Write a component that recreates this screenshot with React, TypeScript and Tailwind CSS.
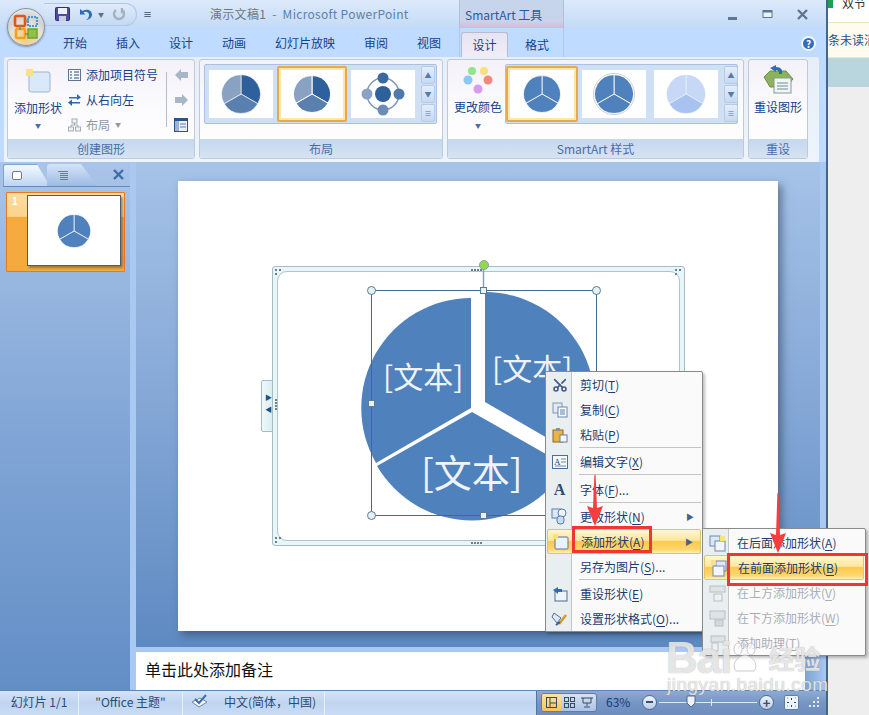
import type { ReactNode } from 'react'
import { Scissors } from 'lucide-react'

const wedgeLeft = 'M471 298 A110 110 0 0 0 376 463 L471 408 Z'
const wedgeBottom = 'M377 466 A110 110 0 0 0 567 466 L472 412 Z'
const wedgeRight = 'M485 292 A110 110 0 0 1 580 457 L485 402 Z'

function MiniPie({ size, fills, gap = 0, ring = false }: { size: number; fills: [string, string, string]; gap?: number; ring?: boolean }) {
  return (
    <svg width={size} height={size} viewBox="0 0 100 100">
      {ring && <circle cx="50" cy="50" r="49" fill="#fff" stroke="#c8c8c8" strokeWidth="2" />}
      <path d="M50 50 L50 4 A46 46 0 0 1 90 73 Z" fill={fills[0]} stroke="#fff" strokeWidth={gap} />
      <path d="M50 50 L90 73 A46 46 0 0 1 10 73 Z" fill={fills[1]} stroke="#fff" strokeWidth={gap} />
      <path d="M50 50 L10 73 A46 46 0 0 1 50 4 Z" fill={fills[2]} stroke="#fff" strokeWidth={gap} />
    </svg>
  )
}

function GalleryScroll() {
  return (
    <div className="flex w-[14px] flex-col gap-px self-stretch">
      {['▲', '▼', '≡'].map((g) => (
        <div key={g} className="flex flex-1 items-center justify-center rounded-[2px] border border-[#b6cbe6] bg-gradient-to-b from-[#e4eefb] to-[#c6d9f1] text-[7px] leading-none text-[#5a7aa5]">
          {g}
        </div>
      ))}
    </div>
  )
}

function Thumb({ children, selected = false }: { children: ReactNode; selected?: boolean }) {
  return selected ? (
    <div className="flex h-[56px] items-center justify-center rounded-[2px] border-2 border-[#e9a94a] bg-white shadow-[inset_0_0_0_2px_#fde7a8]">
      {children}
    </div>
  ) : (
    <div className="flex h-[48px] w-[64px] items-center justify-center bg-white">{children}</div>
  )
}

function Group({ label, className, children }: { label: string; className: string; children: ReactNode }) {
  return (
    <div className={`flex h-[100px] flex-col overflow-hidden rounded-[3px] border border-[#bccadb] bg-gradient-to-b from-[#f4f1f8] via-[#fbfbfd] to-white ${className}`}>
      <div className="relative min-h-0 flex-1">{children}</div>
      <div className="flex h-[19px] items-center justify-center bg-gradient-to-b from-[#c5d7ee] to-[#d6e3f3] text-[12px] text-[#4a6da3]">{label}</div>
    </div>
  )
}

function ShapeIcon() {
  return (
    <svg width="18" height="18" viewBox="0 0 18 18">
      <rect x="3" y="4" width="13" height="12" rx="1" fill="#eaf2fb" stroke="#5f7597" />
      <rect x="1" y="1" width="5" height="5" fill="#fce27c" />
    </svg>
  )
}

function KeyLabel({ text, hotkey }: { text: string; hotkey: string }) {
  return (
    <>
      {text}(<span className="underline underline-offset-2">{hotkey[1]}</span>){hotkey.slice(3)}
    </>
  )
}

type Row = { text: string; key: string; icon: ReactNode; arrow?: boolean; hot?: boolean; after?: boolean; wide?: boolean }

const menuRows: Row[] = [
  { text: '剪切', key: '(T)', icon: <Scissors size={16} strokeWidth={2.4} className="-rotate-90 text-[#3f5a86]" /> },
  { text: '复制', key: '(C)', icon: <svg width="16" height="16" viewBox="0 0 16 16"><rect x="1" y="1" width="9" height="10" fill="#dfe9f7" stroke="#7f98bb" /><rect x="6" y="5" width="9" height="10" fill="#f7fafe" stroke="#6d87ab" /><path d="M8 8h5M8 10h5M8 12h5" stroke="#5f7fb0" /></svg> },
  { text: '粘贴', key: '(P)', after: true, icon: <svg width="16" height="16" viewBox="0 0 16 16"><rect x="1" y="3" width="10" height="12" fill="#e5b44d" stroke="#8d6a1e" /><rect x="4" y="1" width="4" height="3" fill="#8a8f98" /><rect x="8" y="8" width="7" height="7" fill="#f4f7fb" stroke="#6c7fa0" /></svg> },
  { text: '编辑文字', key: '(X)', after: true, wide: true, icon: <svg width="16" height="14" viewBox="0 0 16 14"><rect x=".5" y=".5" width="15" height="13" fill="#f5f8fc" stroke="#4f6d96" /><text x="2" y="10" fontSize="9" fill="#24406b" fontFamily="Liberation Serif">A</text><path d="M9 4h5M9 7h5M3 11h11" stroke="#7087a8" /></svg> },
  { text: '字体', key: '(F)...', after: true, icon: <span className="font-['Liberation_Serif'] text-[16px] font-bold leading-none text-[#2f4a75]">A</span> },
  { text: '更改形状', key: '(N)', arrow: true, icon: <svg width="18" height="17" viewBox="0 0 18 17"><rect x="1" y="1" width="9" height="9" fill="#dbe8f7" stroke="#5e7da6" /><circle cx="11" cy="5" r="4" fill="#eef4fb" stroke="#5e7da6" /><rect x="6" y="8" width="7" height="8" rx="3" fill="#c9dcf2" stroke="#5e7da6" /></svg> },
  { text: '添加形状', key: '(A)', arrow: true, hot: true, icon: <ShapeIcon /> },
  { text: '另存为图片', key: '(S)...', after: true, icon: null },
  { text: '重设形状', key: '(E)', icon: <svg width="17" height="16" viewBox="0 0 17 16"><rect x="4" y="5" width="12" height="10" fill="#eef4fb" stroke="#4f6d96" /><path d="M2 4 L7 1 V3 H11 V6 H7 V8 Z" fill="#2f6db2" /></svg> },
  { text: '设置形状格式', key: '(O)...', icon: <svg width="17" height="16" viewBox="0 0 17 16"><path d="M3 2 L10 7 L6 12 L1 6 Z" fill="#dfe8f3" stroke="#4f6d96" /><path d="M8 13 L15 4" stroke="#d49b2c" strokeWidth="2.5" /><path d="M5 14 L9 11" stroke="#3c5f93" strokeWidth="2" /></svg> },
]

const subRows: { text: string; key: string; hot?: boolean; off?: boolean; icon: ReactNode }[] = [
  { text: '在后面添加形状', key: '(A)', icon: <svg width="18" height="18" viewBox="0 0 18 18"><rect x="1" y="2" width="10" height="10" fill="#dbe8f7" stroke="#6f89ad" /><rect x="6" y="7" width="10" height="10" fill="#f2f6fb" stroke="#6f89ad" /><rect x="11" y="2" width="5" height="5" fill="#fce27c" /></svg> },
  { text: '在前面添加形状', key: '(B)', hot: true, icon: <svg width="18" height="18" viewBox="0 0 18 18"><rect x="6" y="2" width="10" height="10" fill="#dbe8f7" stroke="#6f89ad" /><rect x="3" y="7" width="11" height="10" fill="#f2f6fb" stroke="#6f89ad" /><rect x="1" y="1" width="5" height="5" fill="#fce27c" /></svg> },
  { text: '在上方添加形状', key: '(V)', off: true, icon: <svg width="18" height="18" viewBox="0 0 18 18"><rect x="1" y="2" width="15" height="6" fill="#dfe3e6" stroke="#b8bfc6" /><rect x="5" y="10" width="8" height="7" fill="#eef0f2" stroke="#b8bfc6" /></svg> },
  { text: '在下方添加形状', key: '(W)', off: true, icon: <svg width="18" height="18" viewBox="0 0 18 18"><rect x="1" y="2" width="15" height="8" fill="#dfe3e6" stroke="#b8bfc6" /><rect x="6" y="11" width="8" height="6" fill="#d5d9dd" stroke="#b8bfc6" /></svg> },
  { text: '添加助理', key: '(T)', off: true, icon: <svg width="18" height="18" viewBox="0 0 18 18"><rect x="2" y="2" width="14" height="6" fill="#dfe3e6" stroke="#b8bfc6" /><rect x="3" y="9" width="6" height="8" fill="#eef0f2" stroke="#b8bfc6" /></svg> },
]

const hotRow = 'rounded-[2px] border border-[#e3c26f] bg-[linear-gradient(#fff6d2_0,#ffe69d_45%,#fdc94e_50%,#fdd76f_85%,#fff0b8_100%)]'

function ContextMenu() {
  return (
    <div className="absolute left-[545px] top-[371px] w-[158px] rounded-[2px] border border-[#8a8a8a] bg-[#fafafa] shadow-[2px_2px_3px_rgba(0,0,0,0.25)]">
      <div className="absolute bottom-0 left-0 top-0 w-[26px] border-r border-[#c5c5c5] bg-[#e9eef0]" />
      {menuRows.map((r) => (
        <div key={r.text}>
          <div className={`relative mx-[1px] flex h-[25px] items-center ${r.hot ? hotRow : ''}`}>
            <div className="flex w-[25px] shrink-0 items-center justify-center">{r.icon}</div>
            <span className="ml-[8px] whitespace-nowrap text-[12px] text-[#1c3a6e]">
              <KeyLabel text={r.text} hotkey={r.key} />
            </span>
            {r.arrow && <span className="absolute right-[7px] text-[8px] text-[#47628c]">▶</span>}
          </div>
          {r.after && <div className={`ml-[33px] mr-[1px] h-px bg-[#c5c5c5] ${r.wide ? 'mb-[2px]' : 'mb-[1px]'}`} />}
        </div>
      ))}
    </div>
  )
}

function SubMenu() {
  return (
    <div className="absolute left-[702px] top-[528px] w-[164px] rounded-[2px] border border-[#8a8a8a] bg-[#fafafa] pt-[1px] shadow-[2px_2px_3px_rgba(0,0,0,0.25)]">
      <div className="absolute bottom-0 left-0 top-0 w-[26px] border-r border-[#c5c5c5] bg-[#e9eef0]" />
      {subRows.map((r) => (
        <div key={r.text} className={`relative mx-[1px] flex h-[25px] items-center ${r.hot ? hotRow : ''}`}>
          <div className="flex w-[27px] shrink-0 items-center justify-center">{r.icon}</div>
          <span className={`ml-[6px] whitespace-nowrap text-[12px] ${r.off ? 'text-[#a9aeb4]' : 'text-[#1c3a6e]'}`}>
            <KeyLabel text={r.text} hotkey={r.key} />
          </span>
        </div>
      ))}
    </div>
  )
}

function RedArrow({ x, y, h }: { x: number; y: number; h: number }) {
  return (
    <svg className="absolute" style={{ left: x - 9, top: y }} width="18" height={h} viewBox={`0 0 18 ${h}`}>
      <path d={`M8.4 0 H9.6 L11 ${h - 18} L17 ${h - 20} L9 ${h} L1 ${h - 20} L7 ${h - 18} Z`} fill="#f73d3d" />
    </svg>
  )
}

function Handle({ x, y, kind }: { x: number; y: number; kind: 'round' | 'square' }) {
  return (
    <div
      className={`absolute border border-[#5b7c94] ${kind === 'round' ? 'h-[9px] w-[9px] rounded-full bg-[#e4f1f5]' : 'h-[7px] w-[7px] bg-[#e3f4fb]'}`}
      style={{ left: x - (kind === 'round' ? 4.5 : 3.5), top: y - (kind === 'round' ? 4.5 : 3.5) }}
    />
  )
}

function Grip({ x, y, vertical = false }: { x: number; y: number; vertical?: boolean }) {
  return (
    <div className={`absolute flex gap-[1px] ${vertical ? 'flex-col' : ''}`} style={{ left: x, top: y }}>
      {[0, 1, 2, 3].map((i) => (
        <div key={i} className="h-[2px] w-[2px] bg-[#6d7f8c]" />
      ))}
    </div>
  )
}

function CornerGrip({ x, y }: { x: number; y: number }) {
  return (
    <div className="absolute grid grid-cols-2 gap-[2px]" style={{ left: x, top: y }}>
      {[1, 1, 1, 0].map((on, i) => (
        <div key={i} className={`h-[2px] w-[2px] ${on ? 'bg-[#6d7f8c]' : ''}`} />
      ))}
    </div>
  )
}

function PieLabel({ x, y, size, children }: { x: number; y: number; size: number; children: string }) {
  return (
    <span className="absolute whitespace-nowrap leading-none text-[#eef3f9]" style={{ left: x, top: y, fontSize: size }}>
      {children}
    </span>
  )
}

function Diagram() {
  return (
    <>
      <div className="absolute left-[261px] top-[380px] h-[52px] w-[12px] rounded-l-[2px] border border-[#a9bcc4] bg-gradient-to-r from-[#eef8fb] to-[#d9eef4]">
        <span className="absolute left-[3px] top-[13px] text-[7px] leading-none text-[#1c4f86]">▶</span>
        <span className="absolute left-[3px] top-[25px] text-[7px] leading-none text-[#1c4f86]">◀</span>
      </div>
      <div className="absolute left-[272px] top-[266px] h-[280px] w-[413px] rounded-[3px] border border-[#a8bcc2] bg-[#e7f6f9] p-[4px]">
        <div className="h-full w-full rounded-[10px] border border-[#b4c3c8] bg-white" />
      </div>
      <CornerGrip x={275} y={269} />
      <CornerGrip x={275} y={537} />
      <CornerGrip x={675} y={269} />
      <CornerGrip x={675} y={537} />
      <Grip x={471} y={542} />
      <Grip x={471} y={269} />
      <Grip x={275} y={399} vertical />
      <svg className="absolute left-0 top-0" width="869" height="715" viewBox="0 0 869 715">
        <path d={wedgeLeft} fill="#4f81bd" />
        <path d={wedgeBottom} fill="#4f81bd" />
        <path d={wedgeRight} fill="#4f81bd" />
        <rect x="371.5" y="290.5" width="225" height="225" fill="none" stroke="#47688c" />
        <line x1="483.5" y1="270" x2="483.5" y2="290" stroke="#8aa0b5" strokeWidth="1.5" />
        <circle cx="484" cy="265" r="4.5" fill="#93d94e" stroke="#8aa0a0" />
      </svg>
      <Handle x={371.5} y={290.5} kind="round" />
      <Handle x={596.5} y={290.5} kind="round" />
      <Handle x={371.5} y={515.5} kind="round" />
      <Handle x={596.5} y={515.5} kind="round" />
      <Handle x={483.5} y={290} kind="square" />
      <Handle x={371.5} y={403} kind="square" />
      <Handle x={483.5} y={515.5} kind="square" />
      <PieLabel x={383} y={360} size={30}>[文本]</PieLabel>
      <PieLabel x={492} y={352} size={30}>[文本]</PieLabel>
      <PieLabel x={421} y={452} size={38}>[文本]</PieLabel>
    </>
  )
}

function OfficeButton() {
  return (
    <div className="absolute left-[7px] top-[8px] flex h-[38px] w-[38px] items-center justify-center rounded-full border border-[#8c939c] bg-[radial-gradient(circle_at_50%_80%,#f7c877_0,#e8e2d2_45%,#cfd2d6_62%,#f4f5f6_100%)] shadow-[0_1px_2px_rgba(60,70,90,0.5)]">
      <svg width="26" height="26" viewBox="0 0 26 26">
        <rect x="2" y="2" width="10" height="10" rx="1.5" fill="none" stroke="#e2561c" strokeWidth="2.6" />
        <rect x="15" y="3" width="9" height="9" fill="none" stroke="#4a9ad4" strokeWidth="2.2" strokeDasharray="2 1" />
        <rect x="3" y="15" width="9" height="9" rx="1.5" fill="none" stroke="#efa220" strokeWidth="2.6" />
        <rect x="15" y="15" width="9" height="9" fill="#8fc14a" stroke="#6ea52f" strokeWidth="1.5" />
        <path d="M12 7h4M7 12v4M12 20h4" stroke="#7f8a6a" strokeWidth="1.5" />
      </svg>
    </div>
  )
}

function TitleBar() {
  return (
    <div className="relative flex h-[28px] items-center bg-gradient-to-b from-[#dceafb] to-[#c4daf6]">
      <div className="ml-[44px] flex h-[23px] w-[93px] items-center gap-[8px] rounded-r-[12px] border border-l-0 border-[#b0c8e6] bg-gradient-to-b from-[#dfebfa] to-[#c5d9f3] pl-[11px]">
        <svg width="15" height="14" viewBox="0 0 15 14">
          <rect x=".5" y=".5" width="14" height="13" rx="1" fill="#4a4ea0" stroke="#2e2f74" />
          <rect x="3" y="1" width="9" height="6" fill="#eef0fa" />
          <rect x="4" y="9" width="7" height="5" fill="#c9cce2" />
        </svg>
        <svg width="15" height="13" viewBox="0 0 15 13">
          <path d="M2 1 V6.5 H7.5 L5.4 4.4 C7.5 3 11 4 11 7 C11 9 10 11 8 12 C12 11.5 14 9 14 6.5 C14 2.5 9 0 4.5 3 Z" fill="#2f6db2" />
        </svg>
        <span className="-ml-[3px] text-[6px] text-[#5a708f]">▼</span>
        <svg width="14" height="14" viewBox="0 0 14 14">
          <path d="M4 3 A5 5 0 1 0 10 3 M10 1 V5 H13" fill="none" stroke="#a4b1c0" strokeWidth="2.4" />
        </svg>
      </div>
      <span className="ml-[6px] text-[9px] font-bold leading-none text-[#3a4a64]">≡</span>
      <span className="ml-[58px] whitespace-pre text-[12px] tracking-[0.3px] text-[#5d7fa8]">
        <span className="text-[#6e7680]">演示文稿1</span>  -  Microsoft PowerPoint
      </span>
      <div className="absolute left-[459px] top-0 flex h-[28px] w-[105px] items-end border-x border-[#b3bfd9] bg-gradient-to-b from-[#c5d5ec] via-[#c9d3ea] via-75% to-[#d8b8d8] pb-[4px] pl-[5px] text-[12px] text-[#2c5a97]">
        <span className="whitespace-nowrap">SmartArt 工具</span>
      </div>
      <div className="ml-auto mr-[17px] flex items-center gap-[22px]">
        <svg width="13" height="13" viewBox="0 0 13 13"><rect x="2" y="9" width="9" height="3" fill="#5e7690" /></svg>
        <svg width="13" height="13" viewBox="0 0 13 13"><rect x="2" y="2.5" width="9" height="7" fill="#eef4fb" stroke="#5e7690" /><rect x="2" y="2" width="9" height="2.5" fill="#5e7690" /></svg>
        <svg width="13" height="13" viewBox="0 0 13 13"><path d="M2 2 L11 11 M11 2 L2 11" stroke="#5e7690" strokeWidth="2.4" /></svg>
      </div>
    </div>
  )
}

function TabBar() {
  return (
    <div className="relative flex h-[29px] items-center gap-[29px] bg-[#bfdbff] pl-[63px] text-[12px] text-[#15428b]">
      {['开始', '插入', '设计', '动画', '幻灯片放映', '审阅', '视图'].map((t) => (
        <span key={t} className="whitespace-nowrap">{t}</span>
      ))}
      <div className="absolute bottom-0 left-[459px] top-0 w-[105px] border-x border-[#aecaed]" />
      <div className="absolute bottom-0 left-[461px] flex h-[25px] w-[47px] items-center justify-center rounded-t-[3px] border border-b-0 border-[#b5bbd1] bg-gradient-to-b from-[#e6e4f2] to-[#f1edf7]">设计</div>
      <span className="absolute left-[525px] top-[8px]">格式</span>
      <div className="absolute left-[801px] top-[8px] flex h-[15px] w-[15px] items-center justify-center rounded-full border-2 border-[#f0f6fd] bg-[#2e6fc6] text-[10px] font-bold leading-none text-white">?</div>
    </div>
  )
}

function Ribbon() {
  return (
    <div className="flex h-[105px] gap-[4px] bg-[#bfdbff] pl-[4px]">
      <div className="flex h-[105px] w-[815px] gap-[4px] rounded-[3px] bg-gradient-to-b from-[#e8eef8] to-[#eef4fb] pl-[3px] pt-[2px] shadow-[0_1px_0_#fff]">
        <Group label="创建图形" className="w-[188px]">
          <div className="absolute left-[5px] top-0 flex w-[50px] flex-col items-center text-[12px] text-[#15428b]">
            <svg width="26" height="26" viewBox="0 0 26 26" className="mt-[7px]">
              <rect x="4" y="5" width="21" height="20" rx="2" fill="#d9e9fa" stroke="#9db4cf" />
              <rect x="1" y="2" width="7" height="7" fill="#fbe27a" />
            </svg>
            <span className="mt-[6px] whitespace-nowrap">添加形状</span>
            <span className="mt-[4px] text-[6px] text-[#4a6da3]">▼</span>
          </div>
          <div className="absolute left-[60px] top-[2px] flex flex-col text-[12px] text-[#15428b]">
            <div className="flex h-[25px] items-center gap-[5px]">
              <svg width="13" height="12" viewBox="0 0 13 12"><rect x=".5" y=".5" width="12" height="11" fill="#f5f8fd" stroke="#5f7390" /><path d="M2 3h2M2 6h2M2 9h2M6 3h5M6 6h5M6 9h5" stroke="#274b7f" /></svg>
              <span className="whitespace-nowrap">添加项目符号</span>
            </div>
            <div className="flex h-[25px] items-center gap-[5px]">
              <svg width="13" height="13" viewBox="0 0 13 13"><path d="M1 4h8V1l4 3.5L9 7V5.5H1z" fill="#2f6db2" /><path d="M12 9H4V6.5L0 9.5 4 13v-2.5h8z" fill="#2c64ad" /></svg>
              <span className="whitespace-nowrap">从右向左</span>
            </div>
            <div className="flex h-[25px] items-center gap-[5px] text-[#8f98a3]">
              <svg width="13" height="14" viewBox="0 0 13 14"><rect x="4" y="1" width="5" height="4" fill="#eef0f3" stroke="#a5adb8" /><rect x=".5" y="9" width="5" height="4" fill="#eef0f3" stroke="#a5adb8" /><rect x="7.5" y="9" width="5" height="4" fill="#eef0f3" stroke="#a5adb8" /><path d="M6.5 5v2M3 9V7h7v2" fill="none" stroke="#a5adb8" /></svg>
              <span className="whitespace-nowrap">布局</span>
              <span className="text-[6px]">▼</span>
            </div>
          </div>
          <div className="absolute left-[158px] top-[12px] h-[55px] w-px bg-[#aebfd4]" />
          <div className="absolute left-[166px] top-[2px] flex flex-col items-center">
            <div className="flex h-[25px] items-center"><svg width="13" height="12" viewBox="0 0 13 12"><path d="M0 6 L6 0 V3 H13 V9 H6 V12 Z" fill="#a9b6c6" /></svg></div>
            <div className="flex h-[25px] items-center"><svg width="13" height="12" viewBox="0 0 13 12"><path d="M13 6 L7 0 V3 H0 V9 H7 V12 Z" fill="#a9b6c6" /></svg></div>
            <div className="flex h-[25px] items-center"><svg width="14" height="14" viewBox="0 0 14 14"><rect x=".5" y=".5" width="13" height="13" fill="#e9f0f9" stroke="#2d5486" /><rect x="1" y="1" width="12" height="2" fill="#2d5486" /><rect x="1" y="3" width="4" height="10" fill="#9bb5d6" /><path d="M6 6h6M6 9h6" stroke="#5f7fa8" /></svg></div>
          </div>
        </Group>
        <Group label="布局" className="w-[244px]">
          <div className="absolute left-[4px] top-[4px] flex h-[60px] w-[233px] items-center gap-[4px] rounded-[2px] border border-[#a9c2e2] bg-[#cfe0f4] pl-[4px]">
            <Thumb><MiniPie size={42} gap={1.5} fills={['#2e609c', '#5a80b0', '#8aa2c2']} /></Thumb>
            <Thumb selected><div className="flex w-[66px] justify-center"><MiniPie size={40} gap={2.5} fills={['#2e609c', '#5a80b0', '#8aa2c2']} /></div></Thumb>
            <Thumb>
              <svg width="44" height="44" viewBox="0 0 44 44">
                <circle cx="22" cy="22" r="16" fill="none" stroke="#7d95b8" strokeWidth="1.5" />
                <circle cx="22" cy="22" r="8" fill="#2e609c" />
                <circle cx="22" cy="6" r="5.5" fill="#3a689f" />
                <circle cx="38" cy="22" r="5.5" fill="#4f79ad" />
                <circle cx="22" cy="38" r="5.5" fill="#6d8cb6" />
                <circle cx="6" cy="22" r="5.5" fill="#8ba2c2" />
              </svg>
            </Thumb>
            <div className="ml-[2px] flex self-stretch py-[1px]"><GalleryScroll /></div>
          </div>
        </Group>
        <Group label="SmartArt 样式" className="w-[297px]">
          <div className="absolute left-[5px] top-0 flex w-[50px] flex-col items-center text-[12px] text-[#15428b]">
            <svg width="30" height="28" viewBox="0 0 30 28" className="mt-[6px]">
              <circle cx="9" cy="5" r="4" fill="#8ee88a" />
              <circle cx="21" cy="5" r="4" fill="#f7e27a" />
              <circle cx="5" cy="14" r="4.5" fill="#8cc6f7" />
              <circle cx="25" cy="14" r="4.5" fill="#f08a7a" />
              <circle cx="15" cy="23" r="4.5" fill="#d89af0" />
            </svg>
            <span className="mt-[4px] whitespace-nowrap">更改颜色</span>
            <span className="mt-[5px] text-[6px] text-[#4a6da3]">▼</span>
          </div>
          <div className="absolute left-[57px] top-[4px] flex h-[60px] w-[233px] items-center rounded-[2px] border border-[#a9c2e2] bg-[#cfe0f4]">
            <Thumb selected><div className="flex w-[68px] justify-center"><MiniPie size={40} gap={2} fills={['#4f81bd', '#4f81bd', '#4f81bd']} /></div></Thumb>
            <div className="ml-[4px]"><Thumb><MiniPie size={42} gap={2} ring fills={['#4f81bd', '#4f81bd', '#4f81bd']} /></Thumb></div>
            <div className="ml-[8px]"><Thumb><MiniPie size={42} gap={1} fills={['#c6d8f5', '#a9c3f0', '#c6d8f5']} /></Thumb></div>
            <div className="ml-[6px] flex self-stretch py-[1px]"><GalleryScroll /></div>
          </div>
        </Group>
        <Group label="重设" className="w-[60px]">
          <div className="flex flex-col items-center text-[12px] text-[#15428b]">
            <svg width="32" height="30" viewBox="0 0 32 30" className="mt-[5px]">
              <path d="M2 12 L8 6 H24 L31 14 L24 22 H8 Z" fill="#8cb25c" stroke="#6d9142" />
              <rect x="12" y="13" width="17" height="15" fill="#f2f5f3" stroke="#8a9896" />
              <path d="M15 18h11M15 21h11M15 24h11" stroke="#6f8c9c" />
              <path d="M8 3 L14 0 V2 C19 2 21 5 20 9 L17 9 C17 6 16 5 14 5 V7 Z" fill="#2f6db2" />
            </svg>
            <span className="mt-[3px] whitespace-nowrap">重设图形</span>
          </div>
        </Group>
      </div>
    </div>
  )
}

function LeftPane() {
  return (
    <div className="flex w-[130px] shrink-0 flex-col bg-gradient-to-b from-[#a9c4e8] via-[#82a6d6] to-[#628ec6] pl-[3px]">
      <div className="relative flex h-[25px] items-end border-b border-[#5e8cc2]">
        <div className="flex h-[22px] w-[47px] items-center rounded-tl-[3px] border border-b-0 border-[#7ea4d0] bg-gradient-to-b from-[#f4f9fe] to-[#bcd4f0] pl-[8px] [clip-path:polygon(0_0,72%_0,100%_100%,0_100%)]">
          <div className="h-[9px] w-[10px] rounded-[2px] border border-[#6e7c8c] bg-white" />
        </div>
        <div className="-ml-[3px] flex h-[22px] w-[50px] items-center rounded-tl-[3px] bg-gradient-to-b from-[#d4e4f7] to-[#9dbbe2] pl-[10px] [clip-path:polygon(0_0,68%_0,100%_100%,0_100%)]">
          <svg width="12" height="9" viewBox="0 0 12 9"><path d="M1 .5h10M3 2.5h8M3 4.5h8M3 6.5h8M3 8.5h8" stroke="#6e7c8c" /></svg>
        </div>
        <svg width="11" height="11" viewBox="0 0 11 11" className="absolute right-[6px] top-[7px]">
          <path d="M1 1 L10 10 M10 1 L1 10" stroke="#3e6da6" strokeWidth="2.4" />
        </svg>
      </div>
      <div className="mt-[5px] ml-[3px] flex h-[80px] w-[119px] overflow-hidden rounded-[1px] border border-[#e8781e] bg-[linear-gradient(#fcdca0_0,#fbd48c_30%,#f5ab3f_31%,#f3a93e_100%)]">
        <span className="ml-[5px] mt-[3px] w-[6px] text-[10px] font-bold leading-none text-white">1</span>
        <div className="ml-[9px] mt-[2px] flex h-[71px] w-[94px] items-center justify-center border border-[#505a68] bg-white shadow-[2px_2px_2px_rgba(60,60,60,0.45)]">
          <MiniPie size={36} gap={2} fills={['#4f81bd', '#4f81bd', '#4f81bd']} />
        </div>
      </div>
    </div>
  )
}

function StatusCell({ children, className = '' }: { children: ReactNode; className?: string }) {
  return <div className={`flex h-full items-center whitespace-nowrap border-r border-[#e8f0fb] pb-[3px] ${className}`}>{children}</div>
}

function StatusBar() {
  return (
    <div className="flex h-[25px] items-stretch border-t border-[#5e85b8] bg-gradient-to-b from-[#d5e4f7] via-[#bfd4f0] to-[#c9dcf5] text-[12px] text-[#2a4a78]">
      <StatusCell className="w-[79px] justify-center">幻灯片 1/1</StatusCell>
      <StatusCell className="w-[104px] justify-center">"Office 主题"</StatusCell>
      <StatusCell className="w-[142px] pl-[8px]">
        <svg width="17" height="15" viewBox="0 0 17 15" className="mr-[16px]">
          <path d="M1 8 L9 4 L16 8 L8 13 Z" fill="#f5f7fb" stroke="#6a86ab" />
          <path d="M4 5 L8 9 L15 1" fill="none" stroke="#3f6ea8" strokeWidth="2" />
        </svg>
        中文(简体，中国)
      </StatusCell>
      <div className="flex-1" />
      <div className="flex w-[290px] items-center border-l border-[#4f76a8] bg-gradient-to-b from-[#8eabd3] via-[#7695c4] to-[#6d8dbe] pb-[2px] pl-[4px]">
        <div className="flex h-[19px] w-[56px] overflow-hidden rounded-[3px] border border-[#5e7ea8] bg-gradient-to-b from-[#d5e3f5] to-[#aac3e6]">
          <div className="flex w-[19px] items-center justify-center bg-gradient-to-b from-[#fde3a0] to-[#fbc15c]">
            <svg width="11" height="11" viewBox="0 0 11 11"><rect x=".5" y=".5" width="10" height="10" fill="none" stroke="#3a4a5c" /><path d="M4 1v9M4 6h6" stroke="#3a4a5c" /></svg>
          </div>
          <div className="flex w-[18px] items-center justify-center">
            <svg width="11" height="11" viewBox="0 0 11 11"><rect x=".5" y=".5" width="4" height="4" fill="none" stroke="#3a4a5c" /><rect x="6.5" y=".5" width="4" height="4" fill="none" stroke="#3a4a5c" /><rect x=".5" y="6.5" width="4" height="4" fill="none" stroke="#3a4a5c" /><rect x="6.5" y="6.5" width="4" height="4" fill="none" stroke="#3a4a5c" /></svg>
          </div>
          <div className="flex w-[18px] items-center justify-center">
            <svg width="12" height="11" viewBox="0 0 12 11"><path d="M0 1h12M2 1v5h8V1M6 6v3M3 10h6" fill="none" stroke="#3a4a5c" /></svg>
          </div>
        </div>
        <span className="ml-[9px] w-[34px] text-[#143a80]">63%</span>
        <div className="ml-[2px] flex h-[15px] w-[15px] items-center justify-center rounded-full border border-[#4c6a92] bg-gradient-to-b from-[#f0f5fb] to-[#b9cde8]"><div className="h-[2px] w-[7px] bg-[#3a5070]" /></div>
        <div className="relative mx-[2px] h-px w-[98px] bg-[#dfe9f6]">
          <div className="absolute left-[52px] top-[-3px] h-[7px] w-px bg-[#dfe9f6]" />
          <svg width="10" height="13" viewBox="0 0 10 13" className="absolute left-[27px] top-[-7px]"><path d="M1 1h8v7l-4 4-4-4z" fill="#eef3fa" stroke="#4c6a92" /></svg>
        </div>
        <div className="flex h-[15px] w-[15px] items-center justify-center rounded-full border border-[#4c6a92] bg-gradient-to-b from-[#f0f5fb] to-[#b9cde8] text-[13px] font-bold leading-none text-[#3a5070]">+</div>
        <div className="ml-[10px] flex h-[15px] w-[15px] items-center justify-center rounded-[2px] border border-[#5e7ea8] bg-[#edf3fa]">
          <svg width="11" height="11" viewBox="0 0 11 11"><path d="M5.5 1v2M5.5 8v2M1 5.5h2M8 5.5h2" stroke="#3a4a5c" /><path d="M1 1h1M9 1h1M1 9h1M9 9h1" stroke="#8a95a5" /></svg>
        </div>
        <div className="ml-[10px] grid grid-cols-3 gap-[2px]">
          {[0, 0, 1, 0, 1, 1, 1, 1, 1].map((on, i) => (
            <div key={i} className={`h-[2px] w-[2px] ${on ? 'bg-[#e6edf7]' : ''}`} />
          ))}
        </div>
      </div>
    </div>
  )
}

function SideWindow() {
  return (
    <div className="flex w-[41px] shrink-0 flex-col overflow-hidden bg-[#eeeeee]">
      <div className="flex h-[22px] items-start gap-[9px] bg-white text-[12px] leading-none text-[#333]">
        <div className="h-[8px] w-[5px] bg-[#1f9e54]" />
        <span className="-mt-[3px] whitespace-nowrap">双节</span>
      </div>
      <div className="flex h-[36px] items-center whitespace-nowrap border-y border-[#f0e3c4] bg-[#fffbee] text-[12px] text-[#1c4f86]">条未读消</div>
      <div className="h-[29px] bg-[#b9d6de]" />
    </div>
  )
}

function Watermark() {
  return (
    <div className="pointer-events-none absolute left-[666px] top-[636px] flex flex-col items-start font-['Liberation_Sans'] text-white/75 [text-shadow:0_0_1px_rgba(110,110,110,0.7)]">
      <div className="flex items-center">
        <span className="text-[44px] font-bold leading-none tracking-[-1px]">Bai</span>
        <svg width="30" height="34" viewBox="0 0 30 34" className="-ml-[1px]">
          <ellipse cx="8" cy="8" rx="4" ry="6" fill="#fff" fillOpacity="0.6" stroke="#999" strokeOpacity="0.5" />
          <ellipse cx="21" cy="8" rx="4" ry="6" fill="#fff" fillOpacity="0.6" stroke="#999" strokeOpacity="0.5" />
          <path d="M6 30 C0 22 10 14 15 14 C20 14 30 22 24 30 Z" fill="#fff" fillOpacity="0.6" stroke="#999" strokeOpacity="0.5" />
        </svg>
        <span className="ml-[8px] font-['Noto_Sans_CJK_SC'] text-[26px] font-bold leading-none">经验</span>
      </div>
      <span className="-mt-[5px] ml-[1px] text-[19px] leading-none tracking-[0.5px]">jingyan.baidu.com</span>
    </div>
  )
}

export default function App() {
  return (
    <div className="relative flex h-[715px] w-[869px] overflow-hidden bg-[#eeeeee] font-['Noto_Sans_CJK_SC','Noto_Sans',sans-serif]">
      <div className="flex w-[828px] shrink-0 flex-col border-r-2 border-[#47648a]">
        <TitleBar />
        <TabBar />
        <Ribbon />
        <div className="flex min-h-0 flex-1 bg-[#bfdbff]">
          <LeftPane />
          <div className="w-[6px] shrink-0 bg-[#a9c9f2]" />
          <div className="flex min-w-0 flex-1 flex-col">
            <div className="flex min-h-0 flex-1">
              <div className="flex flex-1 items-center justify-center bg-gradient-to-b from-[#a6c3e8] via-[#84a7d6] to-[#5e8ac2] pt-[3px]">
                <div className="h-[450px] w-[600px] bg-white shadow-[4px_4px_8px_rgba(40,60,90,0.55)]" />
              </div>
              <div className="w-[6px] shrink-0 bg-[#a9c9f2]" />
            </div>
            <div className="h-[5px] bg-[#a9c9f2]" />
            <div className="flex h-[38px]">
              <div className="flex flex-1 items-center bg-white pb-[4px] pl-[9px] text-[16px] text-[#111]">单击此处添加备注</div>
              <div className="w-[21px] bg-gradient-to-r from-[#7ea2d3] to-[#a9c9f2]" />
            </div>
          </div>
        </div>
        <StatusBar />
      </div>
      <SideWindow />
      <OfficeButton />
      <Diagram />
      <ContextMenu />
      <SubMenu />
      <div className="pointer-events-none absolute left-[572px] top-[526px] h-[27px] w-[80px] border-[3px] border-[#f03535]" />
      <div className="pointer-events-none absolute left-[727px] top-[553px] h-[33px] w-[141px] border-[3px] border-[#f03535]" />
      <RedArrow x={595} y={475} h={51} />
      <RedArrow x={778} y={493} h={60} />
      <Watermark />
    </div>
  )
}
